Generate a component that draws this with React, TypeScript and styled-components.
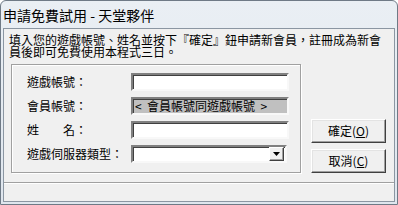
import React from "react";
import styled, { createGlobalStyle } from "styled-components";

const GlobalStyles = createGlobalStyle`
  html, body {
    margin: 0;
    padding: 0;
    background: #ffffff;
  }
  body {
    font-family: "Noto Sans CJK TC", "Liberation Sans", sans-serif;
    font-size: 12px;
    color: #000;
  }
`;

const Window = styled.div`
  width: 396px;
  height: 203px;
  display: flex;
  flex-direction: column;
  background: linear-gradient(#eaeff4, #dfe6ee);
  border: 1px solid #6f7a86;
  border-radius: 6px 6px 0 0;
`;

const TitleBar = styled.div`
  height: 27px;
  display: flex;
  align-items: center;
  padding-left: 2px;
  font-size: 14px;
  line-height: 14px;
  white-space: nowrap;
`;

const Client = styled.div`
  flex: 1;
  margin: 0 2px 2px 2px;
  display: flex;
  flex-direction: column;
  background: #f0f0f0;
  border: 1px solid #8b96a2;
`;

const Intro = styled.div`
  margin: 5px 0 0 5px;
  display: flex;
  flex-direction: column;
`;

const IntroLine = styled.div`
  height: 12px;
  font-size: 12px;
  line-height: 12px;
  white-space: nowrap;
`;

const MainRow = styled.div`
  display: flex;
  align-items: flex-end;
  gap: 10px;
  margin: 6px 0 0 7px;
`;

const GroupBox = styled.div`
  width: 288px;
  display: flex;
  flex-direction: column;
  gap: 6px;
  padding: 8px 0 9px 0;
  border: 1px solid #a0a0a0;
  box-shadow: inset 1px 1px #fff, 1px 1px #fff;
`;

const Row = styled.div`
  display: flex;
  align-items: center;
  height: 18px;
`;

const Label = styled.span`
  width: 104px;
  padding-left: 15px;
  font-size: 12px;
  line-height: 12px;
  white-space: pre;
`;

const Field = styled.div<{ $disabled?: boolean }>`
  width: 152px;
  height: 14px;
  display: flex;
  align-items: center;
  justify-content: space-between;
  padding: 0 0 0 2px;
  background: ${(p) => (p.$disabled ? "#c0c0c0" : "#ffffff")};
  border-top: 2px solid #808080;
  border-left: 2px solid #808080;
  border-bottom: 2px solid #f8f8f8;
  border-right: 2px solid #f8f8f8;
  box-shadow: inset 1px 1px #404040;
  font-size: 12px;
  line-height: 12px;
  white-space: pre;
`;

const Combo = styled(Field)`
  padding: 0;
  justify-content: flex-end;
`;

const DropButton = styled.div`
  width: 13px;
  height: 12px;
  margin: 1px;
  display: flex;
  align-items: center;
  justify-content: center;
  background: #f0f0f0;
  border-top: 1px solid #fff;
  border-left: 1px solid #fff;
  border-right: 1px solid #404040;
  border-bottom: 1px solid #404040;
  box-shadow: inset -1px -1px #a0a0a0;
`;

const ButtonColumn = styled.div`
  display: flex;
  flex-direction: column;
  gap: 6px;
`;

const Button = styled.button`
  width: 75px;
  height: 24px;
  padding: 0;
  background: #f0f0f0;
  font-family: "Noto Sans CJK TC", "Liberation Sans", sans-serif;
  font-size: 12px;
  line-height: 12px;
  color: #000;
  border-top: 1px solid #fff;
  border-left: 1px solid #fff;
  border-right: 1px solid #404040;
  border-bottom: 1px solid #404040;
  box-shadow: inset -1px -1px #a0a0a0, inset 1px 1px #e3e3e3;
  cursor: default;

  u {
    text-decoration: underline;
  }
`;

const StatusBar = styled.div`
  margin-top: auto;
  height: 18px;
  border-top: 1px solid #a0a0a0;
  box-shadow: inset 0 1px #fff;
`;

export default function App() {
  return (
    <>
      <GlobalStyles />
      <Window>
        <TitleBar>申請免費試用 - 天堂夥伴</TitleBar>
        <Client>
          <Intro>
            <IntroLine>填入您的遊戲帳號、姓名並按下『確定』鈕申請新會員，註冊成為新會</IntroLine>
            <IntroLine>員後即可免費使用本程式三日。</IntroLine>
          </Intro>
          <MainRow>
            <GroupBox>
              <Row>
                <Label>遊戲帳號：</Label>
                <Field />
              </Row>
              <Row>
                <Label>會員帳號：</Label>
                <Field $disabled>{"<  會員帳號同遊戲帳號  >"}</Field>
              </Row>
              <Row>
                <Label>{"姓　　名："}</Label>
                <Field />
              </Row>
              <Row>
                <Label>遊戲伺服器類型：</Label>
                <Combo>
                  <DropButton>
                    <svg width="7" height="4" viewBox="0 0 7 4">
                      <polygon points="0,0 7,0 3.5,4" fill="#000" />
                    </svg>
                  </DropButton>
                </Combo>
              </Row>
            </GroupBox>
            <ButtonColumn>
              <Button>
                確定(<u>O</u>)
              </Button>
              <Button>
                取消(<u>C</u>)
              </Button>
            </ButtonColumn>
          </MainRow>
          <StatusBar />
        </Client>
      </Window>
    </>
  );
}
